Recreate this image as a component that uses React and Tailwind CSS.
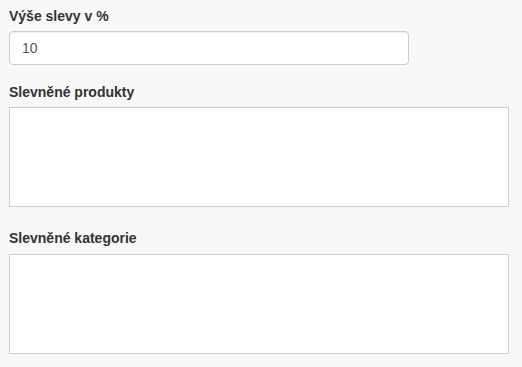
export default function App() {
  return (
    <div className="min-h-[367px] w-[522px] bg-[#f7f7f7] pl-[9px] pt-[6px] font-['Liberation_Sans',Arial,sans-serif] text-[14px] leading-[20px] text-[#333]">
      <div>
        <label className="mb-[5px] block font-bold">Výše slevy v %</label>
        <input
          type="text"
          defaultValue="10"
          className="block h-[34px] w-[400px] rounded-[4px] border border-[#ccc] bg-white px-[12px] py-[6px] text-[14px] text-[#555] shadow-[inset_0_1px_1px_rgba(0,0,0,0.075)] outline-none"
        />
      </div>
      <div className="mt-[17px]">
        <label className="mb-[5px] block font-bold">Slevněné produkty</label>
        <div className="h-[100px] w-[500px] border border-[#ccc] bg-white" />
      </div>
      <div className="mt-[21px]">
        <label className="mb-[6px] block font-bold">Slevněné kategorie</label>
        <div className="h-[100px] w-[500px] border border-[#ccc] bg-white" />
      </div>
    </div>
  );
}
